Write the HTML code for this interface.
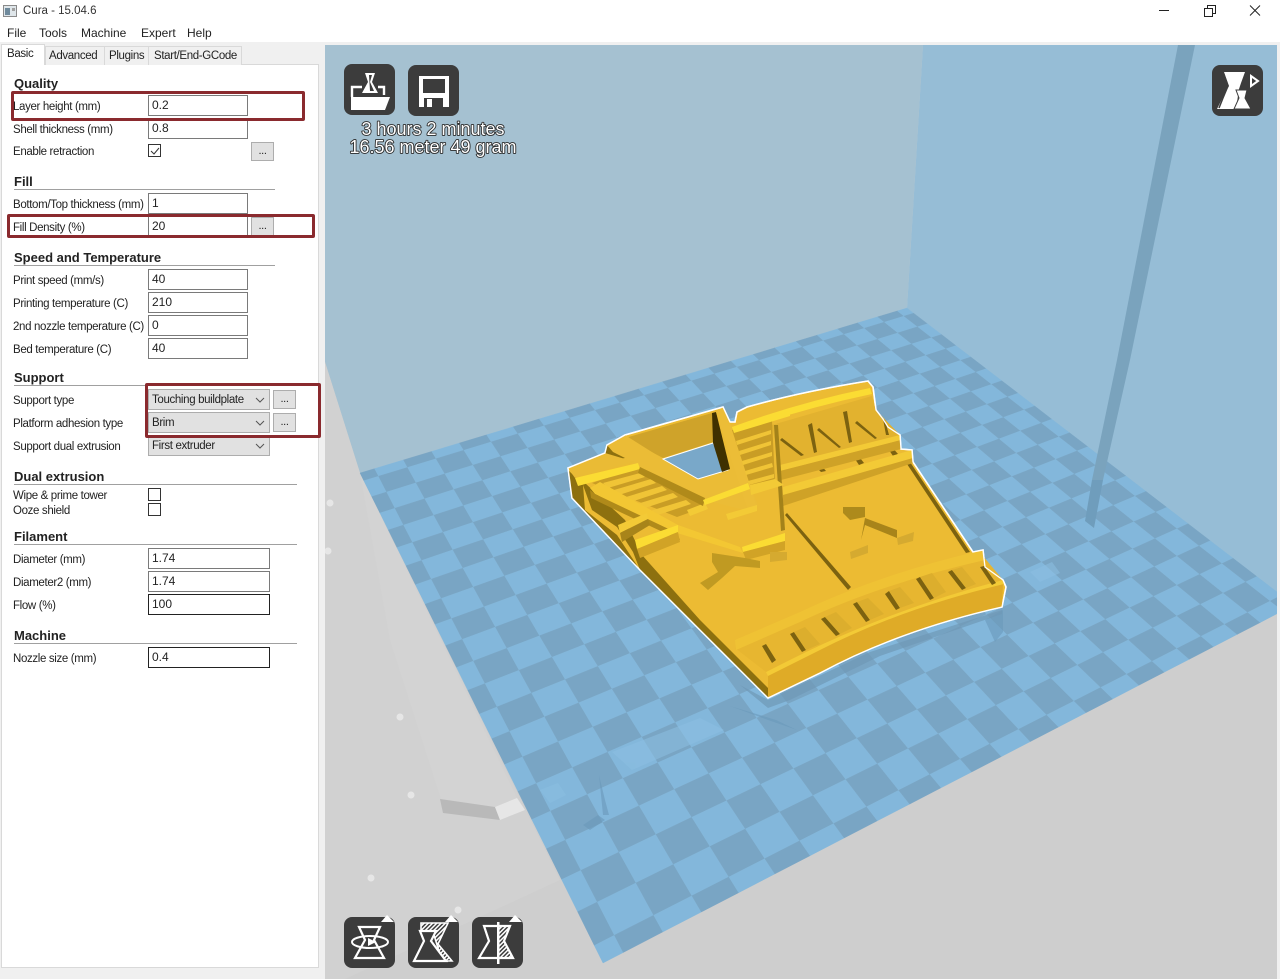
<!DOCTYPE html>
<html><head><meta charset="utf-8"><title>Cura - 15.04.6</title>
<style>
html,body{margin:0;padding:0;width:1280px;height:979px;overflow:hidden;background:#fff;font-family:"Liberation Sans",sans-serif;font-size:11.5px;letter-spacing:-.35px;color:#222}
.a{position:absolute;white-space:nowrap}
.l{position:absolute;left:13px;line-height:14px;white-space:nowrap;margin-top:1px}
.h{position:absolute;left:14px;font-weight:bold;font-size:13px;letter-spacing:0;line-height:15px;color:#222;white-space:nowrap;margin-top:1px}
.r{position:absolute;left:14px;height:1px;background:#a0a0a0}
.i{position:absolute;left:148px;width:95px;height:19px;border:1px solid #7a7a7a;background:#fff;padding-left:3px;line-height:19px;font-size:12px;letter-spacing:0}
.w{width:117px}.k{border-color:#222}
.s{position:absolute;left:148px;width:117px;height:19px;border:1px solid #adadad;background:#e1e1e1;padding-left:3px;line-height:21px}
.s svg{position:absolute;right:4px;top:7px}
.b{position:absolute;width:21px;height:17px;background:#e1e1e1;border:1px solid #adadad;text-align:center;line-height:17px;font-size:11px}
.c{position:absolute;left:148px;width:11px;height:11px;border:1px solid #333;background:#fff}
.m{position:absolute;top:26px;font-size:12px;letter-spacing:0;line-height:14px}
.t{position:absolute;height:18px;background:#f0f0f0;border:1px solid #d9d9d9;border-bottom:0;line-height:18px;top:46px;box-sizing:content-box}
.rb{position:absolute;border:3px solid #8a2a2e;box-sizing:border-box;border-radius:2px}
svg{position:absolute}
</style></head><body>

<!-- viewport -->
<svg id="v" style="left:325px;top:45px" width="952" height="934" viewBox="325 45 952 934">
<defs>
<pattern id="hat" width="3" height="3" patternUnits="userSpaceOnUse" patternTransform="rotate(-45)"><rect width="3" height="3" fill="#3c3c3c"/><rect width="3" height="1.5" fill="#fff"/></pattern>
</defs>
<rect x="325" y="45" width="952" height="934" fill="#cecece"/>
<polygon points="325,45 923,45 907,308 360,473 325,362" fill="#a5c1d1"/>
<polygon points="923,45 1277,45 1277,595 907,308" fill="#96bdd6"/>
<polygon points="325,362 360,473 560,880 345,979 325,979" fill="#d1d1d1"/>
<polygon points="360,473 517,798 495,807 441,799 390,640" fill="#d3d3d3"/>
<polygon points="1178,45 1195,45 1130,360 1117,360" fill="#7aa3bd"/>
<g id="grid"></g>
<polygon points="1117,360 1130,360 1103,480 1092,480" fill="#7aa3bd"/>
<polygon points="1092,480 1103,480 1094,528 1085,521" fill="#6f9dbc"/>
<polygon points="440,799 495,807 500,820 443,813" fill="#b9b9b9"/>
<polygon points="495,807 517,798 525,810 500,820" fill="#e6e6e6"/>
<g fill="#e6e6e6"><circle cx="400" cy="717" r="3.5"/><circle cx="411" cy="795" r="3.5"/><circle cx="371" cy="878" r="3.5"/><circle cx="458" cy="910" r="3.5"/><circle cx="330" cy="503" r="3.5"/><circle cx="328" cy="551" r="3.5"/></g>
<g fill="#8cc0e2" opacity=".55"><polygon points="612,752 700,718 724,730 632,770"/><polygon points="1030,572 1052,562 1060,573 1040,582"/><polygon points="540,790 558,783 566,795 550,803"/></g>
<g fill="#6b99ba" opacity=".6"><polygon points="730,706 776,720 797,730 768,720"/><polygon points="599,775 605,800 609,815 603,815"/><polygon points="583,825 598,815 605,820 590,830"/><polygon points="985,620 1003,610 1003,632 995,642"/></g>
<polygon points="768,700 870,652 1002,610 1002,614 880,656 790,700 768,708 740,685" fill="#6f99b6" opacity=".7"/>

<!-- model -->
<path d="M568,468 L605,453 607,445 625,435 723,407 730,422 735,422 737,412 747,407 Q800,392 868,381 L873,387 876,410 883,419 888,427 900,435 901,449 912,450 913,462 973,552 983,550 985,567 1003,580 1006,587 1002,607 Q900,630 820,673 L768,698 720,650 640,570 572,498Z" fill="#ecbb33" stroke="#fff" stroke-width="1.6"/>
<path d="M568,470 L583,485 592,510 617,527 633,552 640,570 720,650 768,698 770,690 700,620 642,555 625,520 598,495 585,483 575,478Z" fill="#8d700f"/>
<path d="M568,470 L583,485 585,510 617,535 640,570 572,498Z" fill="#8d700f"/>
<!-- front wall -->
<path d="M1003,582 Q900,606 820,647 L768,674 768,698 820,673 Q900,630 1002,607 1006,587Z" fill="#dfab27"/>
<path d="M1003,580 Q900,604 820,645 L766,672 768,676 820,650 Q900,609 1004,584Z" fill="#f3ca36"/>
<!-- ladder floor -->
<path d="M983,556 Q880,580 800,618 L735,648 766,672 Q880,612 1003,580 985,567Z" fill="#e7b630"/>
<path d="M983,550 Q880,574 800,612 L735,640 736,650 800,622 Q880,584 985,560Z" fill="#efc234"/>
<g fill="#7c6210"><polygon points="948,572 952,570 966,588 962,590"/><polygon points="916,579 920,577 934,598 930,600"/><polygon points="885,594 889,591 900,608 896,610"/><polygon points="853,604 857,602 870,620 866,622"/><polygon points="821,619 825,617 840,634 836,636"/><polygon points="790,634 794,632 806,650 802,652"/><polygon points="762,646 766,644 776,660 772,663"/></g>
<g fill="#dcae2d"><polygon points="952,570 962,567 976,584 966,588"/><polygon points="920,577 932,573 946,592 934,598"/><polygon points="889,591 900,587 914,603 900,608"/><polygon points="857,602 868,598 884,614 870,620"/><polygon points="825,617 836,612 852,628 840,634"/><polygon points="794,632 805,627 820,644 806,650"/></g>
<polygon points="980,567 984,566 996,583 992,585" fill="#7c6210"/>
<!-- right panel edge and divider -->
<polygon points="907,464 910,462 970,552 966,553" fill="#7c6210"/>
<polygon points="785,515 787,513 851,587 848,590" fill="#7c6210"/>
<!-- top truss -->
<polygon points="772,425 872,396 876,410 900,435 900,449 790,470 780,470" fill="#e2b22f"/>
<path d="M732,427 Q800,402 870,388 L872,394 Q800,409 734,433Z" fill="#fbdc33"/>
<g fill="#7c6210"><polygon points="808,425 812,423 817,452 814,453"/><polygon points="843,412 847,411 852,442 849,443"/><polygon points="883,419 885,420 889,435 886,435"/><polygon points="780,440 782,438 804,455 801,456"/><polygon points="817,430 819,428 841,447 839,448"/><polygon points="855,423 857,421 877,438 875,439"/><polygon points="815,466 820,464 826,471 821,472"/><polygon points="853,456 857,454 864,463 859,465"/><polygon points="887,447 891,446 898,454 893,456"/></g>
<polygon points="780,465 900,435 901,440 780,471" fill="#f3ca36"/>
<polygon points="780,471 901,440 901,449 781,480" fill="#cfa227"/>
<polygon points="783,487 912,450 913,458 783,495" fill="#f3ca36"/>
<polygon points="783,495 913,458 913,463 783,506" fill="#cfa227"/>
<!-- vertical wall -->
<polygon points="774,425 778,425 785,530 781,531" fill="#a3821a"/>
<!-- left upper block -->
<polygon points="625,438 712,413 713,442 663,458" fill="#cfa32a"/>
<polygon points="607,445 625,435 663,459 698,479 728,470 723,407 734,440 758,506 748,511 705,500 640,467 605,453" fill="#ebbc36"/>
<polygon points="607,445 605,453 613,460 625,458 613,452" fill="#8d700f"/>
<polygon points="663,459 713,443 728,470 698,479" fill="#79a8c9" stroke="#fff" stroke-width="1"/>
<polygon points="712,413 716,412 730,469 722,472 713,443" fill="#3f3000"/>
<!-- right diagonal bar -->
<polygon points="723,407 730,422 757,507 748,511 716,412" fill="#ecbd37"/>
<!-- stairs right -->
<polygon points="732,430 772,420 775,483 750,485" fill="#c99d25"/>
<g fill="#f0c436"><polygon points="736,441 771,430 771,434 737,445"/><polygon points="739,451 771,441 771,445 740,455"/><polygon points="742,461 772,452 772,456 743,465"/><polygon points="745,471 772,463 773,467 746,475"/><polygon points="748,481 774,474 774,478 749,485"/></g>
<polygon points="732,427 790,411 790,416 734,433" fill="#fbdc33"/>
<polygon points="750,485 775,479 784,485 751,495" fill="#f3ca36"/>
<!-- left stairs -->
<polygon points="592,483 638,467 705,507 677,517" fill="#c99d25"/>
<g fill="#f0c436"><polygon points="603,483 640,473 645,477 608,488"/><polygon points="614,490 651,479 656,483 619,495"/><polygon points="626,497 662,486 667,490 631,502"/><polygon points="637,504 673,493 678,497 642,509"/><polygon points="650,511 686,500 691,504 655,516"/></g>
<polygon points="575,478 638,463 640,469 578,486" fill="#fbdc33"/>
<polygon points="568,468 605,453 635,462 575,478" fill="#eabb35"/>
<polygon points="687,510 705,503 708,509 690,516" fill="#f3ca36"/>
<polygon points="640,467 705,498 703,506 638,473" fill="#b08a1a"/>
<polygon points="703,500 748,483 750,489 705,505" fill="#fbdc33"/>
<polygon points="726,514 757,505 757,511 728,520" fill="#f3ca36"/>
<!-- diagonal beam -->
<polygon points="590,488 600,482 678,525 740,547 743,553 677,533 595,494" fill="#f3c733"/>
<polygon points="590,490 595,494 677,533 680,540 620,512 591,498" fill="#b08a1a"/>
<polygon points="618,525 647,513 648,519 620,533" fill="#f3ca36"/>
<polygon points="620,533 648,519 650,525 622,542" fill="#a8841a"/>
<polygon points="635,540 678,525 678,532 637,549" fill="#fbdc33"/>
<polygon points="637,549 678,532 680,542 640,558" fill="#d1a326"/>
<polygon points="742,547 785,533 785,541 743,552" fill="#fbdc33"/>
<polygon points="743,552 785,541 785,550 746,560" fill="#d1a326"/>
<!-- features -->
<polygon points="712,553 745,558 760,561 760,568 735,566 722,578 708,590 700,583 718,572 712,562" fill="#c09a22"/>
<polygon points="843,507 865,507 865,517 850,520 843,513" fill="#ad8a1c"/>
<polygon points="865,518 897,530 897,538 865,525 861,540" fill="#a8841a"/>
<polygon points="897,538 914,532 913,541 898,545" fill="#d5aa30"/>
<polygon points="850,552 868,545 868,553 851,559" fill="#d5aa30"/>
<polygon points="770,552 787,552 787,560 770,562" fill="#d5aa30"/>
<path d="M568,468 L605,453 607,445 625,435 723,407 730,422 735,422 737,412 747,407 Q800,392 868,381 L873,387 876,410 883,419 888,427 900,435 901,449 912,450 913,462 973,552 983,550 985,567 1003,580 1006,587 1002,607 Q900,630 820,673 L768,698 720,650 640,570 572,498Z" fill="none" stroke="#fff" stroke-width="1.3"/>

<!-- icon buttons -->
<g transform="translate(344,64)"><rect width="51" height="51" rx="8" fill="#3c3c3c"/>
<polygon points="21,9 31,9 28,18 34,29 18,29 24,18" fill="#fff"/>
<polygon points="25,11 28,11 26,18 30,27 26,27" fill="#3c3c3c"/>
<path d="M8,33V23H18M34,23H40V31" fill="none" stroke="#fff" stroke-width="2.4"/>
<polygon points="7,33 46,33 41,46 7,46" fill="#fff"/></g>
<g transform="translate(408,65)"><rect width="51" height="51" rx="8" fill="#3c3c3c"/>
<rect x="11" y="11" width="30" height="31" fill="#fff"/><rect x="15" y="14" width="22" height="14" fill="#3c3c3c"/>
<rect x="16" y="33" width="19" height="9" fill="#3c3c3c"/><rect x="19" y="34" width="5" height="8" fill="#fff"/></g>
<g transform="translate(1212,65)"><rect width="51" height="51" rx="8" fill="#3c3c3c"/>
<polygon points="12,7 33,7 29,18 27,24 24,44 5,44 14,26 17,21" fill="#fff"/>
<path d="M11,7L16,21 11,33 7,43" fill="none" stroke="#3c3c3c" stroke-width="1.5"/>
<polygon points="24,25 35,25 33,33 39,44 22,44 27,33" fill="#fff" stroke="#3c3c3c" stroke-width="1"/>
<path d="M39,11L46,16 39,21Z" fill="none" stroke="#fff" stroke-width="2"/></g>
<g transform="translate(344,917)"><rect width="51" height="51" rx="8" fill="#3c3c3c"/><polygon points="37,5 50,5 43,-2" fill="#fff"/>
<path d="M15,10H36L30,23 40,41H11L21,23Z" fill="none" stroke="#fff" stroke-width="2.2"/>
<ellipse cx="26" cy="25" rx="18" ry="6" fill="none" stroke="#fff" stroke-width="2"/>
<polygon points="24,21 32,25 24,29" fill="#fff"/></g>
<g transform="translate(408,917)"><rect width="51" height="51" rx="8" fill="#3c3c3c"/><polygon points="37,5 50,5 43,-2" fill="#fff"/>
<polygon points="13,6 40,6 30,27 44,44 34,44 26,18 13,14" fill="url(#hat)" stroke="#fff" stroke-width="1.6"/>
<path d="M12,14H28L23,24 38,44H6L16,24Z" fill="#3c3c3c" stroke="#fff" stroke-width="2.2"/></g>
<g transform="translate(472,917)"><rect width="51" height="51" rx="8" fill="#3c3c3c"/><polygon points="37,5 50,5 43,-2" fill="#fff"/>
<polygon points="26,9 38,9 32,24 41,41 26,41" fill="url(#hat)"/>
<path d="M12,9H38L32,24 41,41H7L17,24Z" fill="none" stroke="#fff" stroke-width="2.2"/>
<rect x="25" y="5" width="2.5" height="42" fill="#fff"/></g>

<g font-family="Liberation Sans,sans-serif" font-size="18" text-anchor="middle" fill="#fff" stroke="#2a2a2a" stroke-width="1.8" paint-order="stroke" stroke-linejoin="round" style="letter-spacing:0">
<text x="433" y="135">3 hours 2 minutes</text>
<text x="433" y="153">16.56 meter 49 gram</text></g>
</svg>

<!-- window chrome -->
<div class="a" style="left:0;top:42px;width:1280px;height:3px;background:#f0f0f0"></div>
<svg style="left:3px;top:5px" width="14" height="13"><rect x=".5" y=".5" width="13" height="11" fill="#dfe6ea" stroke="#8a8a8a"/><rect x="2" y="3" width="5" height="7" fill="#6f8a9c"/><rect x="9" y="3" width="3" height="3" fill="#a0a0a0"/></svg>
<div class="a" style="left:23px;top:4px;font-size:11.5px;letter-spacing:0;line-height:15px;color:#333">Cura - 15.04.6</div>
<div class="m" style="left:7px">File</div><div class="m" style="left:39px">Tools</div><div class="m" style="left:81px">Machine</div><div class="m" style="left:141px">Expert</div><div class="m" style="left:187px">Help</div>
<svg style="left:1155px;top:3px" width="115" height="15" fill="none" stroke="#222" stroke-width="1"><path d="M4,7.5H14"/><path d="M49.5,5.5h8v8h-8zM52.5,5.5v-3h8v8h-3"/><path d="M95,2.5L105,12.5M105,2.5L95,12.5"/></svg>

<!-- left panel -->
<div class="a" style="left:0;top:45px;width:325px;height:934px;background:#f0f0f0"></div>
<div class="a" style="left:1px;top:64px;width:316px;height:902px;background:#fff;border:1px solid #d9d9d9"></div>
<div class="t" style="left:45px;width:56px;padding-left:3px">Advanced</div>
<div class="t" style="left:104px;width:39px;padding-left:4px">Plugins</div>
<div class="t" style="left:148px;width:87px;padding-left:5px">Start/End-GCode</div>
<div class="a" style="left:1px;top:44px;width:44px;height:21px;background:#fff;border:1px solid #d9d9d9;border-bottom:0;padding-left:5px;box-sizing:border-box;line-height:18px">Basic</div>

<div class="h" style="top:75px">Quality</div>
<div class="l" style="top:99px">Layer height (mm)</div><div class="i" style="top:95px">0.2</div>
<div class="l" style="top:122px">Shell thickness (mm)</div><div class="i" style="top:118px">0.8</div>
<div class="l" style="top:144px">Enable retraction</div>
<div class="c" style="top:144px"><svg style="left:1px;top:1px" width="10" height="10"><path d="M1,5L4,8 9,2" fill="none" stroke="#333" stroke-width="1"/></svg></div>
<div class="b" style="left:251px;top:142px">...</div>

<div class="h" style="top:173px">Fill</div><div class="r" style="top:189px;width:261px"></div>
<div class="l" style="top:197px">Bottom/Top thickness (mm)</div><div class="i" style="top:193px">1</div>
<div class="l" style="top:220px">Fill Density (%)</div><div class="i" style="top:216px">20</div>
<div class="b" style="left:251px;top:217px">...</div>

<div class="h" style="top:249px">Speed and Temperature</div><div class="r" style="top:265px;width:261px"></div>
<div class="l" style="top:273px">Print speed (mm/s)</div><div class="i" style="top:269px">40</div>
<div class="l" style="top:296px">Printing temperature (C)</div><div class="i" style="top:292px">210</div>
<div class="l" style="top:319px">2nd nozzle temperature (C)</div><div class="i" style="top:315px">0</div>
<div class="l" style="top:342px">Bed temperature (C)</div><div class="i" style="top:338px">40</div>

<div class="h" style="top:369px">Support</div><div class="r" style="top:385px;width:261px"></div>
<div class="l" style="top:393px">Support type</div>
<div class="s" style="top:389px">Touching buildplate<svg width="10" height="6"><path d="M1,1L5,5 9,1" fill="none" stroke="#555"/></svg></div>
<div class="b" style="left:273px;top:390px">...</div>
<div class="l" style="top:416px">Platform adhesion type</div>
<div class="s" style="top:412px">Brim<svg width="10" height="6"><path d="M1,1L5,5 9,1" fill="none" stroke="#555"/></svg></div>
<div class="b" style="left:273px;top:413px">...</div>
<div class="l" style="top:439px">Support dual extrusion</div>
<div class="s" style="top:435px">First extruder<svg width="10" height="6"><path d="M1,1L5,5 9,1" fill="none" stroke="#555"/></svg></div>

<div class="h" style="top:468px">Dual extrusion</div><div class="r" style="top:484px;width:283px"></div>
<div class="l" style="top:488px">Wipe &amp; prime tower</div><div class="c" style="top:488px"></div>
<div class="l" style="top:503px">Ooze shield</div><div class="c" style="top:503px"></div>

<div class="h" style="top:528px">Filament</div><div class="r" style="top:544px;width:283px"></div>
<div class="l" style="top:552px">Diameter (mm)</div><div class="i w" style="top:548px">1.74</div>
<div class="l" style="top:575px">Diameter2 (mm)</div><div class="i w" style="top:571px">1.74</div>
<div class="l" style="top:598px">Flow (%)</div><div class="i w k" style="top:594px">100</div>

<div class="h" style="top:627px">Machine</div><div class="r" style="top:643px;width:283px"></div>
<div class="l" style="top:651px">Nozzle size (mm)</div><div class="i w k" style="top:647px">0.4</div>

<div class="rb" style="left:11px;top:91px;width:294px;height:30px"></div>
<div class="rb" style="left:7px;top:214px;width:308px;height:24px"></div>
<div class="rb" style="left:145px;top:383px;width:176px;height:55px"></div>

<div class="a" style="left:1277px;top:45px;width:3px;height:934px;background:#f0f0f0"></div>

<script>
(function(){
var P=[[360,473],[907,308],[1294,605],[603,963]];
var x0=P[0][0],y0=P[0][1],x1=P[1][0],y1=P[1][1],x2=P[2][0],y2=P[2][1],x3=P[3][0],y3=P[3][1];
var dx1=x1-x2,dx2=x3-x2,sx=x0-x1+x2-x3,dy1=y1-y2,dy2=y3-y2,sy=y0-y1+y2-y3;
var d=dx1*dy2-dx2*dy1,g=(sx*dy2-dx2*sy)/d,h=(dx1*sy-sx*dy1)/d;
var a=x1-x0+g*x1,b=x3-x0+h*x3,c=x0,e=y1-y0+g*y1,f=y3-y0+h*y3,k=y0;
function m(u,v){var w=g*u+h*v+1;return ((a*u+b*v+c)/w).toFixed(1)+','+((e*u+f*v+k)/w).toFixed(1);}
var Nu=23,Nv=21,A=[0],B=[0],i,j;
for(i=0;i<Nu;i++)A.push((i+.5)/Nu);A.push(1);
for(i=0;i<Nv;i++)B.push((i+.5)/Nv);B.push(1);
var s='';
for(i=0;i<A.length-1;i++)for(j=0;j<B.length-1;j++){
 var col=(i+j)%2?'#83b7db':'#79a5c4';
 s+='<polygon points="'+m(A[i],B[j])+' '+m(A[i+1],B[j])+' '+m(A[i+1],B[j+1])+' '+m(A[i],B[j+1])+'" fill="'+col+'" stroke="'+col+'" stroke-width=".4"/>';
}
document.getElementById('grid').innerHTML=s;
})();
</script>
</body></html>
